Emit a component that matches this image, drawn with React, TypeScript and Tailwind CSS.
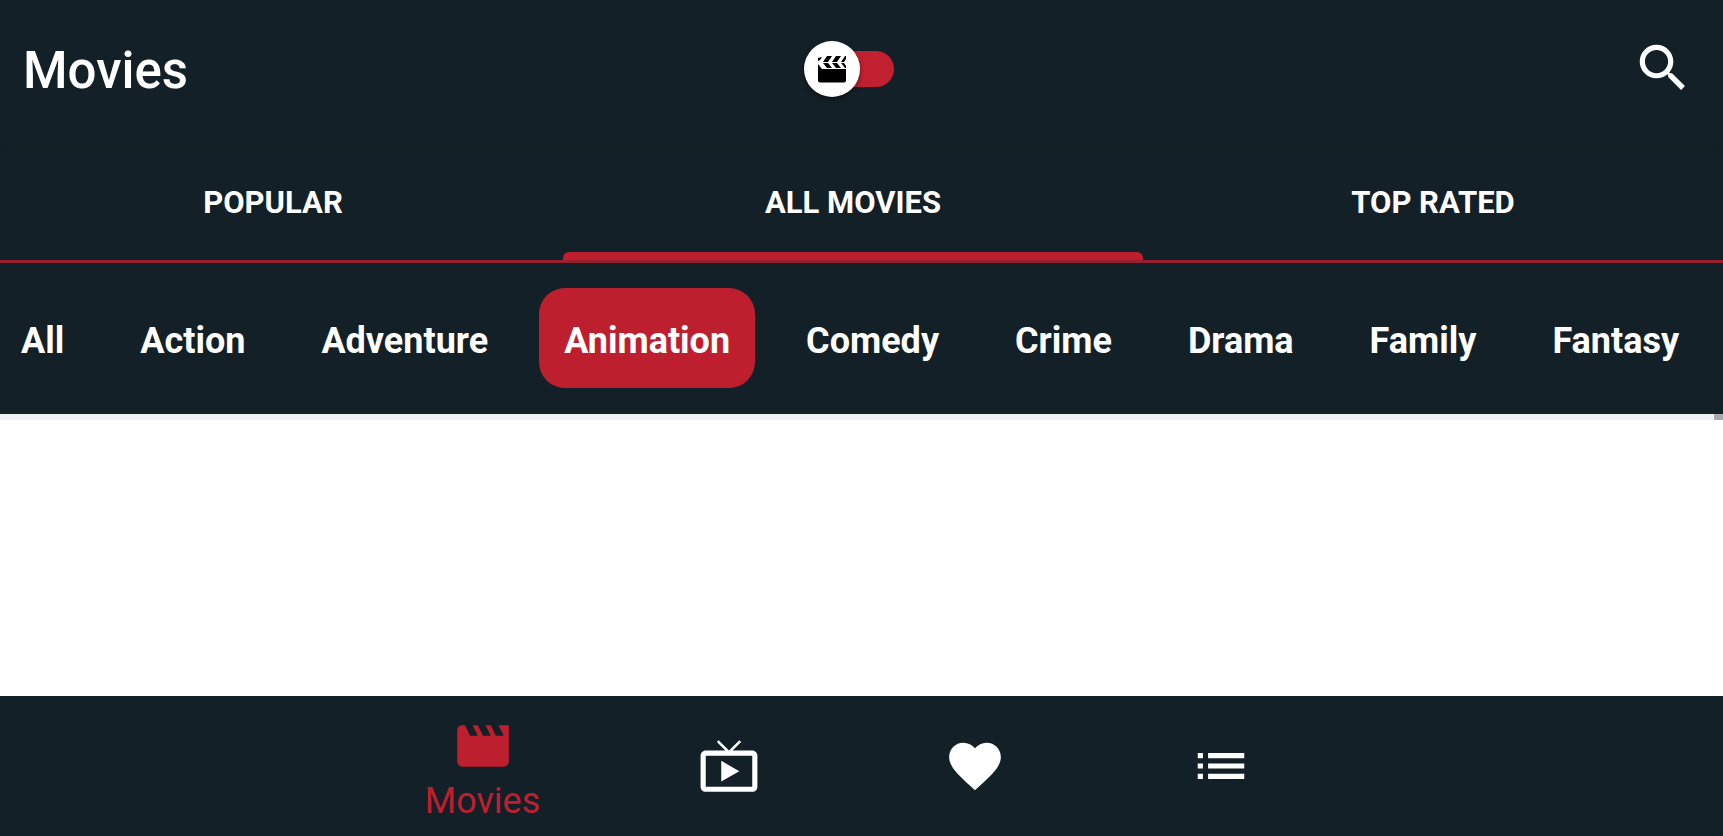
import React, { useState } from "react";

const TABS = ["Popular", "All Movies", "Top Rated"];

const GENRES = [
  "All",
  "Action",
  "Adventure",
  "Animation",
  "Comedy",
  "Crime",
  "Drama",
  "Family",
  "Fantasy",
];

const NAV_ITEMS = [
  {
    label: "Movies",
    path: "M18 4l2 4h-3l-2-4h-2l2 4h-3l-2-4H8l2 4H7L5 4H4c-1.1 0-1.99.9-1.99 2L2 18c0 1.1.9 2 2 2h16c1.1 0 2-.9 2-2V4h-4z",
  },
  {
    label: "TV Shows",
    path: "M21 6h-7.59l3.29-3.29L16 2l-4 4-4-4-.7.71L10.59 6H3c-1.1 0-2 .89-2 2v12c0 1.1.9 2 2 2h18c1.1 0 2-.9 2-2V8c0-1.11-.9-2-2-2zm0 14H3V8h18v12zM9 10v8l7-4z",
  },
  {
    label: "Favorites",
    path: "M12 21.35l-1.45-1.32C5.4 15.36 2 12.28 2 8.5 2 5.42 4.42 3 7.5 3c1.74 0 3.41.81 4.5 2.09C13.09 3.81 14.76 3 16.5 3 19.58 3 22 5.42 22 8.5c0 3.78-3.4 6.86-8.55 11.54L12 21.35z",
  },
  {
    label: "Lists",
    path: "M3 13h2v-2H3v2zm0 4h2v-2H3v2zm0-8h2V7H3v2zm4 4h14v-2H7v2zm0 4h14v-2H7v2zM7 7v2h14V7H7z",
  },
];

function ClapperIcon() {
  return (
    <svg className="h-7 w-7" viewBox="0 0 28 28" fill="currentColor">
      <path d="M0 14h28v11.500a2 2 0 0 1-2 2H2a2 2 0 0 1-2-2z" />
      <path d="M0 3l4-1-2 3-2 1zM9 1h5L10 7H5zM18 1h5l-4 6h-5zM27 1h1v3l-2 3h-3z" />
      <path d="M0 9l4 5H0zM5 8h5l4 5H9zM14 8h5l4 5h-5zM23 8h3l2 3v2h-1z" />
    </svg>
  );
}

interface HeaderProps {
  showTv: boolean;
  onToggle: (value: boolean) => void;
}

function Header({ showTv, onToggle }: HeaderProps) {
  return (
    <header className="grid h-[141px] grid-cols-[1fr_auto_1fr] items-center pr-[29px] pl-[23px] shadow-[0_2px_8px_#14201f]">
      <h1 className="text-[51px] leading-[60px] font-medium">Movies</h1>
      <label className="relative mr-5 mb-1 flex h-14 w-[90px] cursor-pointer items-center justify-end">
        <input
          type="checkbox"
          role="switch"
          aria-label="Switch between movies and TV shows"
          checked={showTv}
          onChange={(e: React.ChangeEvent<HTMLInputElement>) =>
            onToggle(e.target.checked)
          }
          className="peer sr-only"
        />
        <span className="h-9 w-[87px] rounded-full bg-[#c0202f]" />
        <span className="absolute top-0 left-0 flex h-14 w-14 items-center justify-center rounded-full bg-white text-black shadow-[0_2px_4px_rgba(0,0,0,0.5)] transition-transform peer-checked:translate-x-[34px]">
          <ClapperIcon />
        </span>
      </label>
      <button
        type="button"
        aria-label="Search"
        className="mb-1.5 cursor-pointer justify-self-end"
      >
        <svg
          className="h-[62px] w-[62px]"
          fill="currentColor"
          viewBox="0 0 24 24"
        >
          <path d="M15.500 14h-.79l-.28-.27C15.410 12.590 16 11.110 16 9.500 16 5.910 13.090 3 9.500 3S3 5.910 3 9.500 5.910 16 9.500 16c1.610 0 3.090-.59 4.230-1.570l.27.28v.79l5 4.990L20.490 19l-4.990-5zm-6 0C7.010 14 5 11.990 5 9.500S7.010 5 9.500 5 14 7.010 14 9.500 11.990 14 9.500 14z" />
        </svg>
      </button>
    </header>
  );
}

export default function App() {
  const [showTv, setShowTv] = useState(false);
  const [activeTab, setActiveTab] = useState("All Movies");
  const [genre, setGenre] = useState("Animation");
  const [section, setSection] = useState("Movies");

  return (
    <div className="flex min-h-screen flex-col overflow-hidden bg-white font-['Roboto',sans-serif] text-white">
      <div className="bg-[#142028]">
        <Header showTv={showTv} onToggle={setShowTv} />

        {/* Tabs, the strip is slightly wider than the screen */}
        <div
          role="tablist"
          className="flex h-[122px] justify-end overflow-hidden border-b-[3px] border-[#98202e]"
        >
          {TABS.map((tab) => (
            <button
              key={tab}
              type="button"
              role="tab"
              aria-selected={activeTab === tab}
              onClick={() => setActiveTab(tab)}
              className="flex w-[580px] shrink-0 cursor-pointer flex-col items-center justify-between pt-11 text-[31px] leading-9 font-bold uppercase"
            >
              {tab}
              <span
                className={`h-2 w-full rounded-t-md ${
                  activeTab === tab ? "bg-[#bd1f2e]" : "bg-transparent"
                }`}
              />
            </button>
          ))}
        </div>

        {/* Genre chips */}
        <div className="-ml-1 flex gap-[26px] overflow-hidden pt-[25px] pb-[26px]">
          {GENRES.map((name) => (
            <button
              key={name}
              type="button"
              aria-pressed={genre === name}
              onClick={() => setGenre(name)}
              className={`h-[100px] shrink-0 cursor-pointer rounded-[26px] px-[25px] pt-1.5 text-4xl font-bold ${
                genre === name ? "bg-[#bd1f2e]" : ""
              }`}
            >
              {name}
            </button>
          ))}
        </div>
      </div>

      <main className="flex-1">
        <div className="flex h-1.5 justify-end bg-[#f0f1f5]">
          <div className="w-[9px] bg-[#a9a9ad]" />
        </div>
      </main>

      <nav className="flex h-[140px] justify-center bg-[#142028] pr-5">
        {NAV_ITEMS.map(({ label, path }) => (
          <button
            key={label}
            type="button"
            aria-label={label}
            onClick={() => setSection(label)}
            className={`flex w-[246px] cursor-pointer flex-col items-center justify-center ${
              section === label ? "text-[#bd1f2e]" : "text-white"
            }`}
          >
            <svg
              className="h-[62px] w-[62px]"
              fill="currentColor"
              viewBox="0 0 24 24"
            >
              <path d={path} />
            </svg>
            {section === label && (
              <span className="mt-1 -mb-1 text-4xl font-normal">{label}</span>
            )}
          </button>
        ))}
      </nav>
    </div>
  );
}
